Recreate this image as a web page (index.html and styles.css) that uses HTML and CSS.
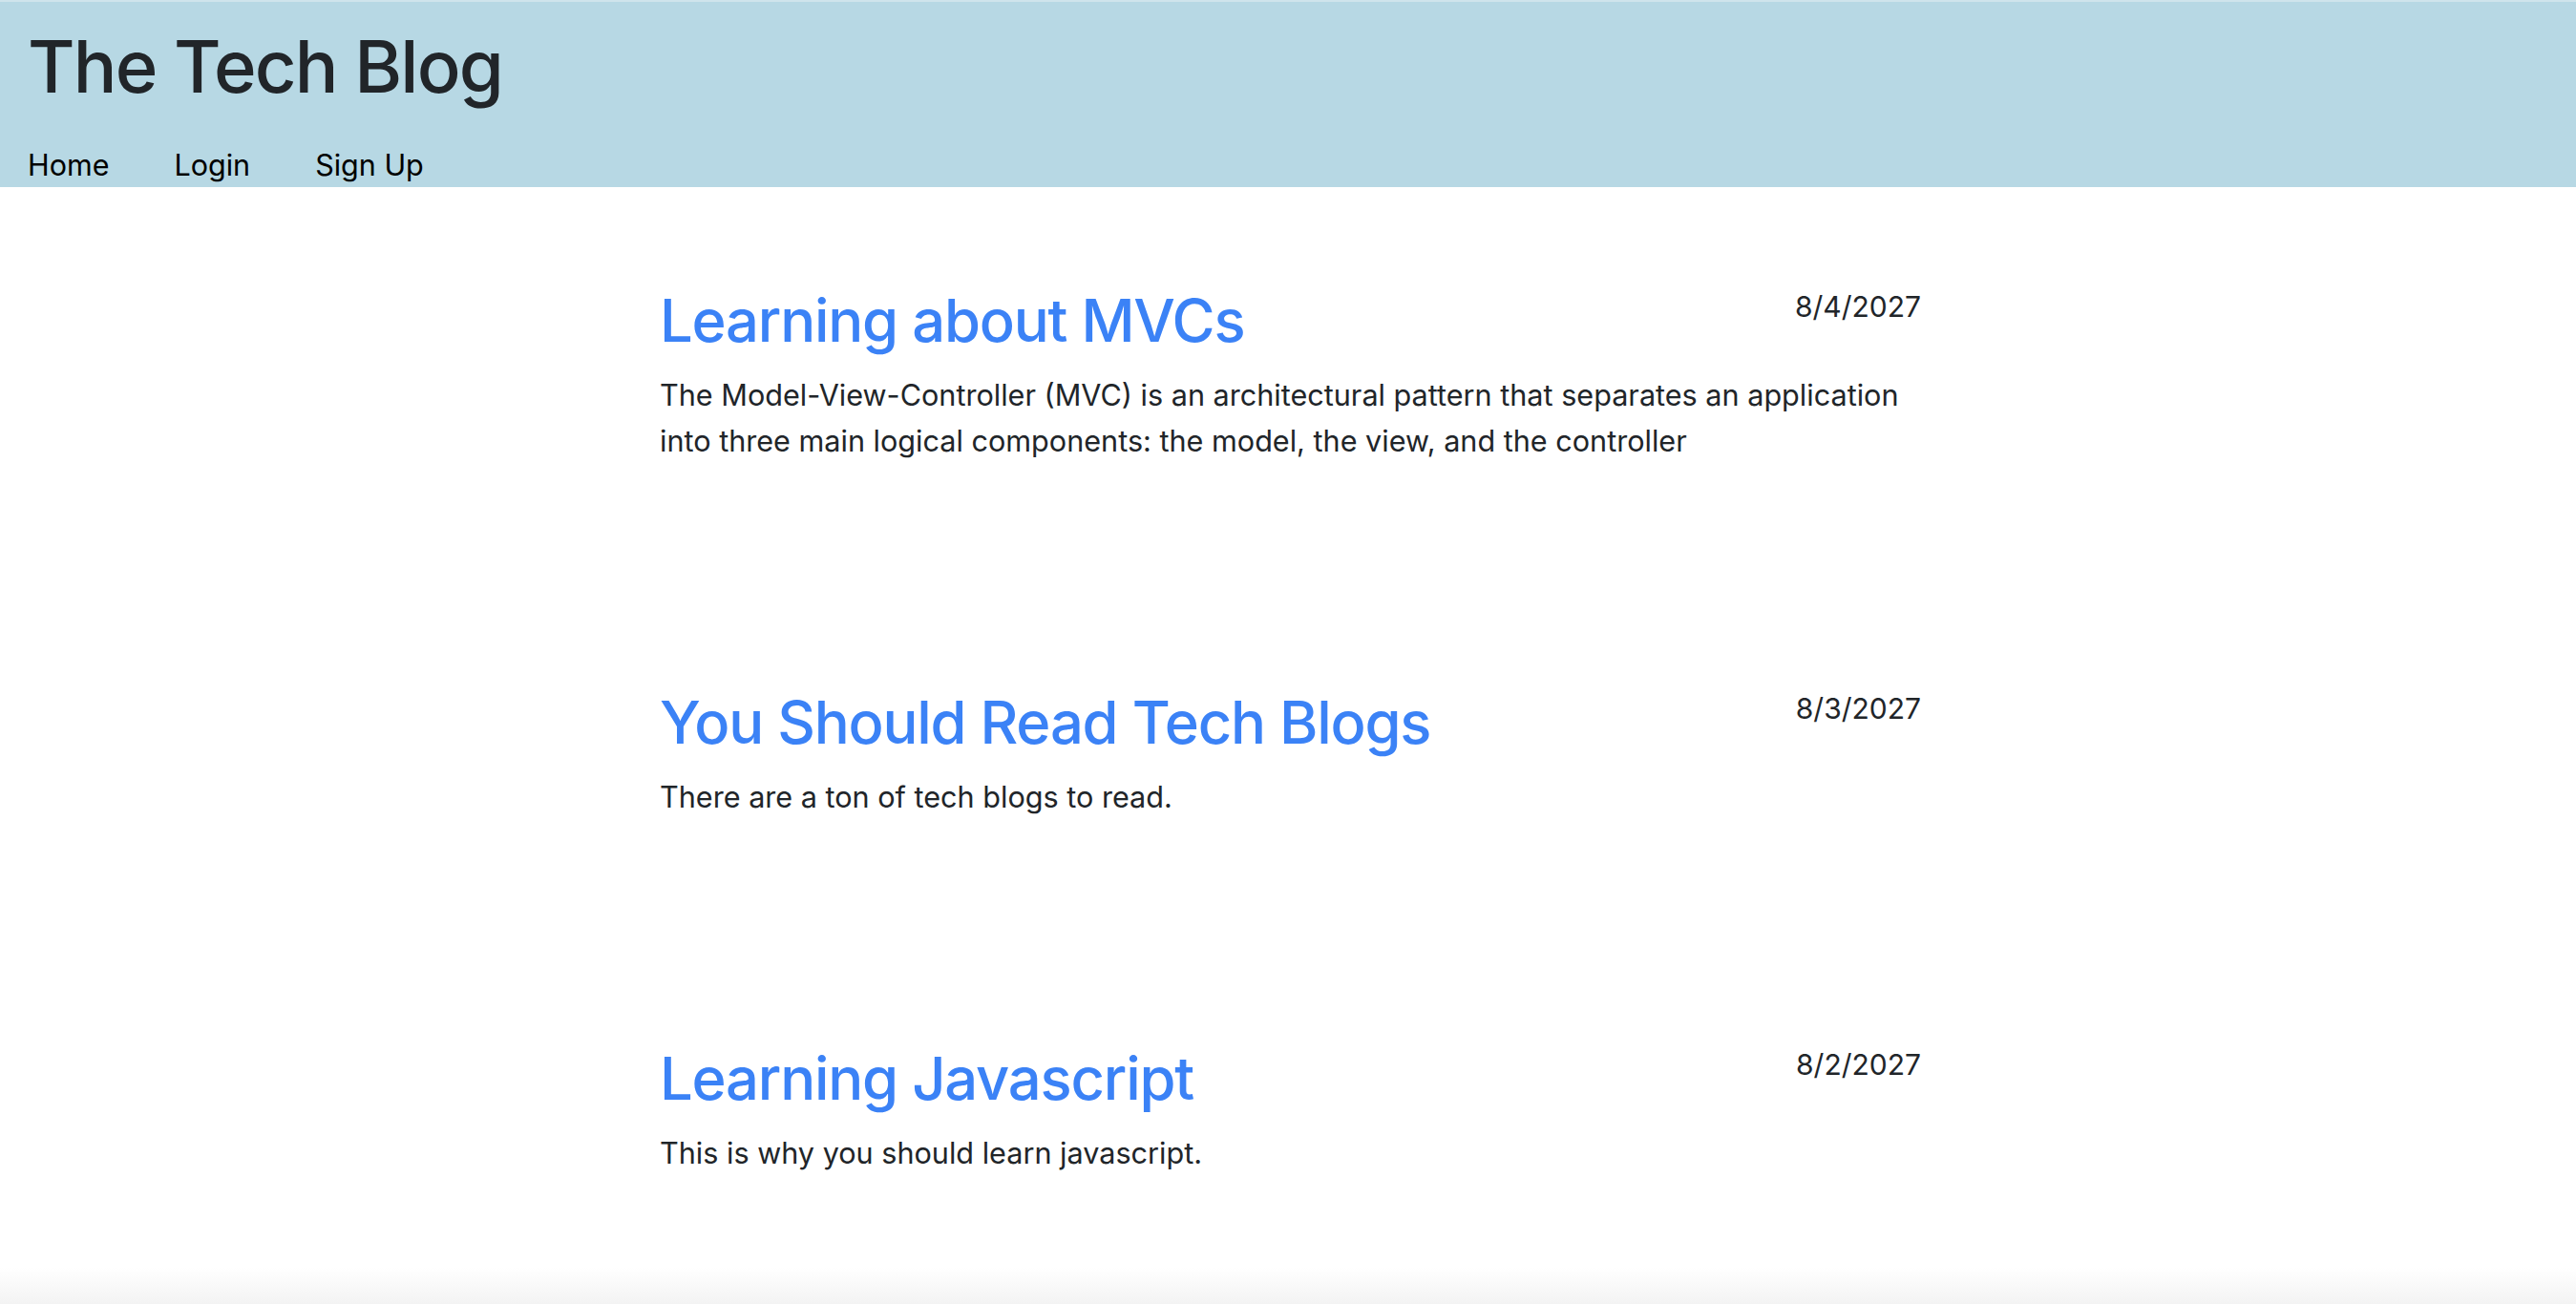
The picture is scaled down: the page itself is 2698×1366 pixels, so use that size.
FILE: index.html
```html
<!DOCTYPE html>
<html lang="en">
<head>
<meta charset="utf-8">
<title>The Tech Blog</title>
<link rel="stylesheet" href="styles.css">
</head>
<body>
<header class="site-header">
  <h1 class="site-title">The Tech Blog</h1>
  <nav class="site-nav">
    <a class="nav-link" href="#">Home</a>
    <a class="nav-link" href="#">Login</a>
    <a class="nav-link" href="#">Sign Up</a>
  </nav>
</header>
<main class="posts">
  <article class="post">
    <div class="post-date">8/4/2027</div>
    <h2 class="post-title">Learning about MVCs</h2>
    <p class="post-text">The Model-View-Controller (MVC) is an architectural pattern that separates an application into three main logical components: the model, the view, and the controller</p>
  </article>
  <article class="post">
    <div class="post-date">8/3/2027</div>
    <h2 class="post-title">You Should Read Tech Blogs</h2>
    <p class="post-text">There are a ton of tech blogs to read.</p>
  </article>
  <article class="post">
    <div class="post-date">8/2/2027</div>
    <h2 class="post-title">Learning Javascript</h2>
    <p class="post-text">This is why you should learn javascript.</p>
  </article>
</main>
</body>
</html>
```
FILE: styles.css
```css
html {
  height: 100%;
  background: linear-gradient(to bottom, #ffffff calc(100% - 38px), #f3f3f3 100%);
}
body {
  margin: 0;
  font-family: Inter, "Liberation Sans", sans-serif;
  color: #212529;
}
.site-header {
  background: #b7d8e4;
  border-top: 2px solid #cfe4ec;
  height: 194px;
  box-sizing: content-box;
  padding: 0 0 0 29px;
  display: flex;
  flex-direction: column;
}
.site-title {
  margin: 0;
  padding-top: 20px;
  font-size: 76px;
  line-height: 94px;
  font-weight: 500;
  letter-spacing: -1.8px;
  color: #212529;
}
.site-nav {
  display: flex;
  gap: 68px;
  margin-top: 37px;
}
.nav-link {
  color: #000;
  text-decoration: none;
  font-size: 30.5px;
  line-height: 40px;
}
.posts {
  width: 1326px;
  margin: 0 auto;
  padding-top: 101px;
  display: flex;
  flex-direction: column;
  gap: 232px;
}
.post {
  padding-left: 5px;
  display: flow-root;
}
.post-date {
  float: right;
  font-size: 30px;
  line-height: 48px;
  color: #212529;
}
.post-title {
  margin: 0;
  font-size: 61.5px;
  line-height: 77px;
  font-weight: 500;
  color: #3b82f6;
  letter-spacing: -1.2px;
}
.post-text {
  margin: 16px 0 0;
  font-size: 30.6px;
  line-height: 48px;
  color: #212529;
}
```
